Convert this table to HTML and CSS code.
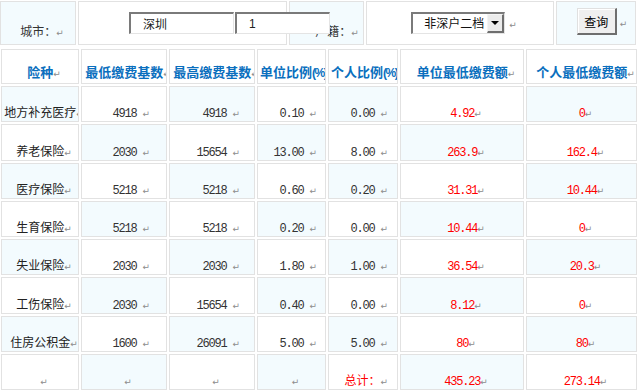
FILE: index.html
```html
<!DOCTYPE html>
<html lang="zh-CN">
<head>
  <meta charset="UTF-8">
  <title>社保缴费查询</title>
  <link rel="stylesheet" href="styles.css">
</head>
<body>
  <table class="query">
    <tr>
      <td class="label bg">城市：<span class="pm">↵</span></td>
      <td class="inputs"><input class="txt city" value="深圳"><input class="txt count" value="1"></td>
      <td class="label huji bg">户籍：<span class="pm">↵</span></td>
      <td class="pick">
        <span class="select"><span class="select-text">非深户二档</span><span class="drop"></span></span><span class="pm">↵</span>
      </td>
      <td class="act bg"><button class="btn">查询</button><span class="pm">↵</span></td>
    </tr>
  </table>

  <table class="rates">
    <tr>
      <th>险种<span class="pm">↵</span></th>
      <th>最低缴费基数<span class="pm">↵</span></th>
      <th>最高缴费基数<span class="pm">↵</span></th>
      <th>单位比例<span class="unit">(%)</span><span class="pm">↵</span></th>
      <th>个人比例<span class="unit">(%)</span><span class="pm">↵</span></th>
      <th>单位最低缴费额<span class="pm">↵</span></th>
      <th>个人最低缴费额<span class="pm">↵</span></th>
    </tr>
    <tr>
      <td>地方补充医疗<span class="pm">↵</span></td>
      <td>4918 <span class="pm">↵</span></td>
      <td>4918 <span class="pm">↵</span></td>
      <td>0.10 <span class="pm">↵</span></td>
      <td>0.00 <span class="pm">↵</span></td>
      <td>4.92<span class="pm">↵</span></td>
      <td>0<span class="pm">↵</span></td>
    </tr>
    <tr class="tall">
      <td>养老保险<span class="pm">↵</span></td>
      <td>2030 <span class="pm">↵</span></td>
      <td>15654 <span class="pm">↵</span></td>
      <td>13.00 <span class="pm">↵</span></td>
      <td>8.00 <span class="pm">↵</span></td>
      <td>263.9<span class="pm">↵</span></td>
      <td>162.4<span class="pm">↵</span></td>
    </tr>
    <tr>
      <td>医疗保险<span class="pm">↵</span></td>
      <td>5218 <span class="pm">↵</span></td>
      <td>5218 <span class="pm">↵</span></td>
      <td>0.60 <span class="pm">↵</span></td>
      <td>0.20 <span class="pm">↵</span></td>
      <td>31.31<span class="pm">↵</span></td>
      <td>10.44<span class="pm">↵</span></td>
    </tr>
    <tr>
      <td>生育保险<span class="pm">↵</span></td>
      <td>5218 <span class="pm">↵</span></td>
      <td>5218 <span class="pm">↵</span></td>
      <td>0.20 <span class="pm">↵</span></td>
      <td>0.00 <span class="pm">↵</span></td>
      <td>10.44<span class="pm">↵</span></td>
      <td>0<span class="pm">↵</span></td>
    </tr>
    <tr>
      <td>失业保险<span class="pm">↵</span></td>
      <td>2030 <span class="pm">↵</span></td>
      <td>2030 <span class="pm">↵</span></td>
      <td>1.80 <span class="pm">↵</span></td>
      <td>1.00 <span class="pm">↵</span></td>
      <td>36.54<span class="pm">↵</span></td>
      <td>20.3<span class="pm">↵</span></td>
    </tr>
    <tr class="tall">
      <td>工伤保险<span class="pm">↵</span></td>
      <td>2030 <span class="pm">↵</span></td>
      <td>15654 <span class="pm">↵</span></td>
      <td>0.40 <span class="pm">↵</span></td>
      <td>0.00 <span class="pm">↵</span></td>
      <td>8.12<span class="pm">↵</span></td>
      <td>0<span class="pm">↵</span></td>
    </tr>
    <tr>
      <td>住房公积金<span class="pm">↵</span></td>
      <td>1600 <span class="pm">↵</span></td>
      <td>26091 <span class="pm">↵</span></td>
      <td>5.00 <span class="pm">↵</span></td>
      <td>5.00 <span class="pm">↵</span></td>
      <td>80<span class="pm">↵</span></td>
      <td>80<span class="pm">↵</span></td>
    </tr>
    <tr class="total">
      <td><span class="pm">↵</span></td>
      <td class="empty"><span class="pm">↵</span></td>
      <td class="empty"><span class="pm">↵</span></td>
      <td class="empty"><span class="pm">↵</span></td>
      <td class="sum-label">总计：<span class="pm">↵</span></td>
      <td>435.23<span class="pm">↵</span></td>
      <td>273.14<span class="pm">↵</span></td>
    </tr>
  </table>
</body>
</html>
```

FILE: styles.css
```css
html,
body {
  margin: 0;
  overflow: hidden;
}

body {
  font-family: "Liberation Sans", "Noto Sans CJK SC", sans-serif;
  font-size: 12px;
  color: #333;
  background: #fff;
}

table {
  border-collapse: separate;
  border-spacing: 2px;
  table-layout: fixed;
}

td,
th {
  box-sizing: border-box;
  border: 1px solid #e2e2e2;
  padding: 0;
  line-height: 14px;
  vertical-align: bottom;
  white-space: nowrap;
}

.bg {
  background: #f3fbfe;
}

/* 段落标记 */
.pm {
  font-family: "DejaVu Sans", sans-serif;
  font-size: 9px;
  font-weight: normal;
  letter-spacing: 0;
  color: #8c8c8c;
  margin-right: -6px;
}

/* 查询条件 */
.query {
  width: 640px;
  margin: -1px 0 0 -2px;
}

.query tr {
  height: 44px;
}

.query td {
  text-align: center;
  padding: 0 0 4px 2px;
}

.query td:nth-child(1) { width: 76px; }
.query td:nth-child(2) { width: 209px; }
.query td:nth-child(3) { width: 75px; }
.query td:nth-child(4) { width: 188px; }
.query td:nth-child(5) { width: 80px; }

.query .huji {
  padding-left: 15px;
}

.query .inputs {
  text-align: left;
  padding: 0 0 10px 50px;
}

.txt {
  position: relative;
  z-index: 1;
  box-sizing: border-box;
  width: 105px;
  height: 22px;
  margin: 0;
  padding: 0 0 0 12px;
  border-style: solid;
  border-width: 2px 1px 1px 2px;
  border-color: #7a7a7a #e4e4e4 #e4e4e4 #7a7a7a;
  background: #fff;
  font-family: "Liberation Sans", "Noto Sans CJK SC", sans-serif;
  font-size: 12px;
  color: #222;
  vertical-align: bottom;
}

.txt.count {
  width: 95px;
  margin-left: 1px;
}

.query .pick {
  padding-bottom: 10px;
}

.select {
  display: inline-flex;
  box-sizing: border-box;
  width: 94px;
  height: 22px;
  margin-right: 4px;
  border-style: solid;
  border-width: 2px 1px 1px 2px;
  border-color: #7a7a7a #e4e4e4 #e4e4e4 #7a7a7a;
  background: #fff;
  color: #111;
  text-align: left;
}

.select-text {
  flex: 1;
  padding: 3px 0 0 11px;
  line-height: 14px;
}

.drop {
  display: flex;
  align-items: center;
  justify-content: center;
  box-sizing: border-box;
  width: 17px;
  border-style: solid;
  border-width: 1px 2px 2px 1px;
  border-color: #f4f4f4 #6e6e6e #6e6e6e #f4f4f4;
  background: #ebebeb;
}

.drop::after {
  content: "";
  border-left: 4px solid transparent;
  border-right: 4px solid transparent;
  border-top: 4px solid #000;
}

.query .act {
  padding: 0 0 9px 6px;
}

.btn {
  box-sizing: border-box;
  width: 40px;
  height: 27px;
  margin-right: 3px;
  padding: 0;
  border-style: solid;
  border-width: 1px 2px 2px 1px;
  border-color: #e0e0e0 #6e6e6e #6e6e6e #e0e0e0;
  box-shadow: inset 1px 1px 0 #fff;
  background: #efefef;
  font-family: "Liberation Sans", "Noto Sans CJK SC", sans-serif;
  font-size: 12px;
  color: #000;
}

/* 费率表 */
.rates {
  width: 640px;
  margin-left: -1px;
}

.rates tr {
  height: 36px;
}

.rates tr.tall {
  height: 37px;
}

.rates tr:first-child {
  height: 35px;
}

.rates th,
.rates td {
  overflow: hidden;
  text-align: center;
  padding: 0 0 0 2px;
}

.rates th {
  padding-bottom: 2px;
  font-size: 13px;
  font-weight: bold;
  color: #0a6fbe;
}

.rates th .unit {
  font-size: 12px;
  letter-spacing: -1.5px;
}

.rates th:nth-child(1) { width: 78px; }
.rates th:nth-child(2) { width: 86px; }
.rates th:nth-child(3) { width: 86px; }
.rates th:nth-child(4) { width: 69px; }
.rates th:nth-child(5) { width: 70px; }
.rates th:nth-child(6) { width: 124px; }
.rates th:nth-child(7) { width: 111px; }

.rates td {
  color: #222;
}

.rates tr:nth-child(even) td:nth-child(odd),
.rates tr:nth-child(odd) td:nth-child(even) {
  background: #f3fbfe;
}

.rates tr.total td {
  background: #fff;
}

.rates td:nth-child(n+2) {
  font-family: "Liberation Mono", "Noto Sans CJK SC", monospace;
  letter-spacing: -1.2px;
  color: #333;
}

.rates td:nth-child(2) { text-align: right; padding-right: 22px; }
.rates td:nth-child(3) { text-align: right; padding-right: 20px; }
.rates td:nth-child(4) { text-align: right; padding-right: 14px; }
.rates td:nth-child(5) { text-align: right; padding-right: 15px; }

.rates td:nth-child(6),
.rates td:nth-child(7) {
  color: #f00;
}

.rates td.empty {
  text-align: center;
  padding-right: 0;
}

.rates td.sum-label {
  color: #f00;
  letter-spacing: 0;
}
```
